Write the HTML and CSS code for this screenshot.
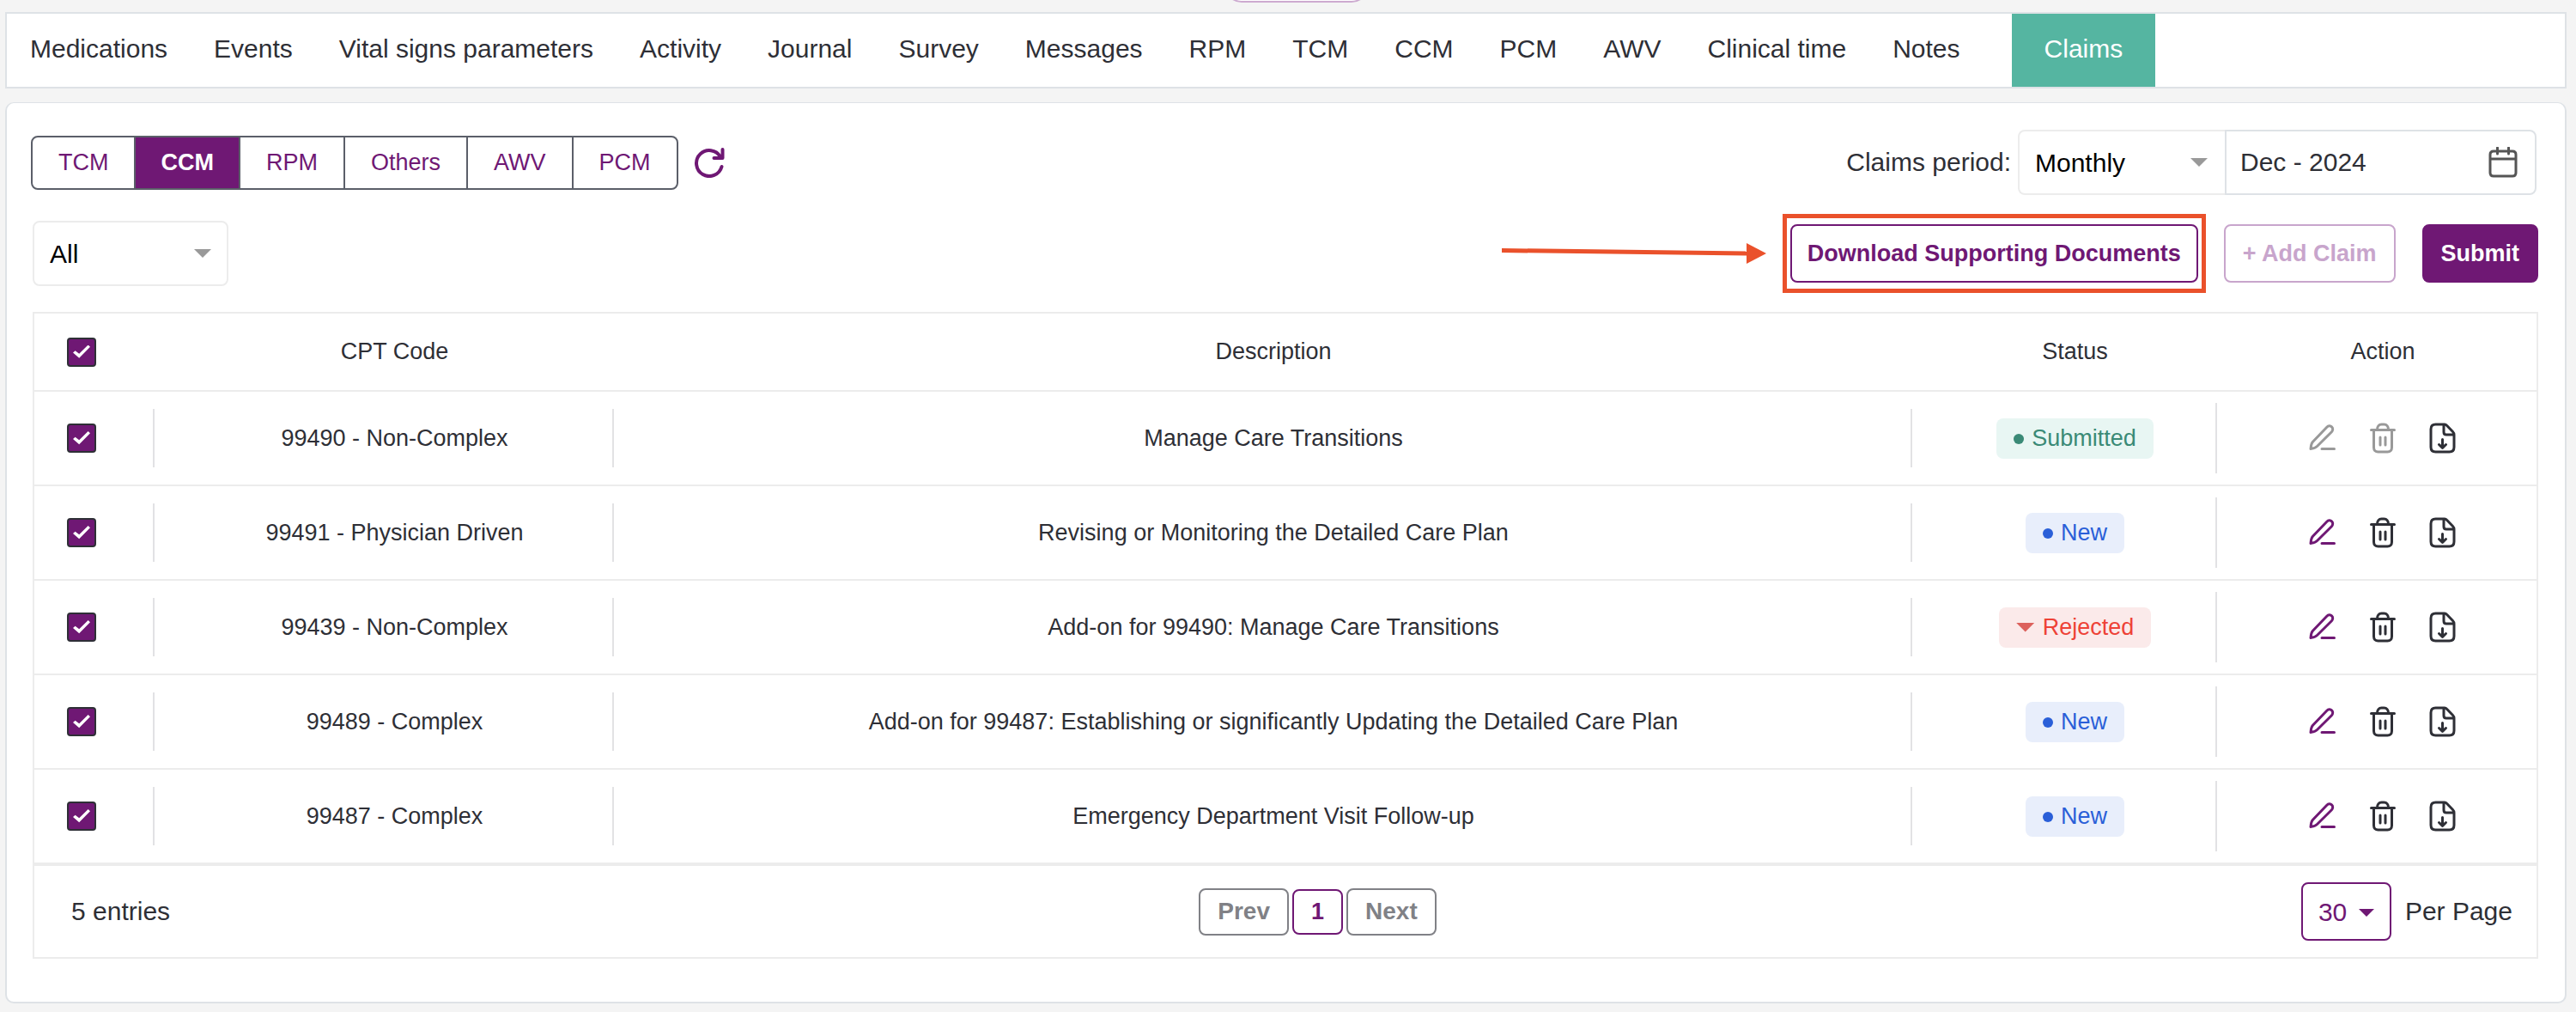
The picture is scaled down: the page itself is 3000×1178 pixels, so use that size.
FILE: index.html
```html
<!DOCTYPE html>
<html lang="en">
<head>
    <meta charset="utf-8">
    <title>Claims</title>
    <link rel="stylesheet" href="styles.css">
</head>

<body>
    <svg class="sprite" aria-hidden="true">
        <symbol id="icon-edit" viewBox="0 0 36 36">
            <path d="M4 30.500C4.300 26.500 4.600 24.500 6.500 22.300L22.800 5.300C24.500 3.500 27 3.300 28.500 4.900C30.200 6.500 30 9 28.400 10.700L11.500 27.500C9.500 29.500 7.500 29.800 4 30.500ZM17 30.500H31.500"/>
        </symbol>
        <symbol id="icon-trash" viewBox="0 0 36 36">
            <path d="M4.500 8.500H31.500M7.500 8.500V29C7.500 32 9.500 34 12.500 34H23.500C26.500 34 28.500 32 28.500 29V8.500M11.500 8C11.500 4.500 13.500 2 16.500 2H19.500C22.500 2 24.500 4.500 24.500 8M15 17V26M21 17V26"/>
        </symbol>
        <symbol id="icon-file" viewBox="0 0 36 36">
            <path d="M20 2H9.500C6 2 4 4 4 7.500V28.500C4 32 6 34 9.500 34H25.500C29 34 31 32 31 28.500V14C31 12.500 30.500 11.500 29.500 10.500L22.500 3.200C21.800 2.400 21 2 20 2ZM19 2V11C19 13 20 14 22 14H31M17.500 19.500V29M13.500 25.500L17.500 29.300L21.500 25.500"/>
        </symbol>
    </svg>

    <div class="topbar">
        <div class="pill"></div>
    </div>

    <nav class="main-nav">
        <a href="#">Medications</a>
        <a href="#">Events</a>
        <a href="#">Vital signs parameters</a>
        <a href="#">Activity</a>
        <a href="#">Journal</a>
        <a href="#">Survey</a>
        <a href="#">Messages</a>
        <a href="#">RPM</a>
        <a href="#">TCM</a>
        <a href="#">CCM</a>
        <a href="#">PCM</a>
        <a href="#">AWV</a>
        <a href="#">Clinical time</a>
        <a href="#">Notes</a>
        <a href="#" class="active">Claims</a>
    </nav>

    <main class="card">
        <div class="toolbar period-row">
            <div class="tab-group">
                <button type="button">TCM</button>
                <button type="button" class="active">CCM</button>
                <button type="button">RPM</button>
                <button type="button">Others</button>
                <button type="button">AWV</button>
                <button type="button">PCM</button>
            </div>
            <button type="button" class="refresh" aria-label="Refresh">
                <svg viewBox="0 0 40 36"><path d="M33 11.500A15 15 0 1 0 34.500 23M35.500 3V13H25.500"/></svg>
            </button>
            <label class="period-label" for="period">Claims period:</label>
            <span class="select period">
                <select id="period"><option>Monthly</option><option>Yearly</option></select>
            </span>
            <span class="date">
                <input type="text" id="month" aria-label="Month" value="Dec - 2024">
                <svg viewBox="0 0 34 36"><path d="M6 5H28Q32 5 32 9V30Q32 34 28 34H6Q2 34 2 30V9Q2 5 6 5ZM2 14H32M10.500 1V8M23.500 1V8"/></svg>
            </span>
        </div>

        <div class="toolbar filter-row">
            <span class="select filter">
                <select id="filter" aria-label="Filter"><option>All</option><option>New</option><option>Submitted</option><option>Rejected</option></select>
            </span>
            <svg class="arrow" viewBox="0 0 308 24"><path d="M0 6L286 9.500V14.500L0 11Z"/><path d="M285 0L308 12L285 24Z"/></svg>
            <span class="highlight">
                <button type="button" class="btn btn-download">Download Supporting Documents</button>
            </span>
            <button type="button" class="btn btn-add" disabled>+ Add Claim</button>
            <button type="button" class="btn btn-submit">Submit</button>
        </div>

        <div class="claims">
            <table>
                <colgroup>
                    <col class="col-check">
                    <col class="col-code">
                    <col>
                    <col class="col-status">
                    <col class="col-action">
                </colgroup>
                <thead>
                    <tr>
                        <th><input type="checkbox" aria-label="Select all" checked></th>
                        <th>CPT Code</th>
                        <th>Description</th>
                        <th>Status</th>
                        <th>Action</th>
                    </tr>
                </thead>
                <tbody>
                    <tr>
                        <td><input type="checkbox" aria-label="Select 99490" checked></td>
                        <td>99490 - Non-Complex</td>
                        <td>Manage Care Transitions</td>
                        <td><span class="badge submitted">Submitted</span></td>
                        <td>
                            <div class="actions">
                                <button type="button" class="edit" aria-label="Edit" disabled><svg><use href="#icon-edit"/></svg></button>
                                <button type="button" aria-label="Delete" disabled><svg><use href="#icon-trash"/></svg></button>
                                <button type="button" aria-label="Download"><svg><use href="#icon-file"/></svg></button>
                            </div>
                        </td>
                    </tr>
                    <tr>
                        <td><input type="checkbox" aria-label="Select 99491" checked></td>
                        <td>99491 - Physician Driven</td>
                        <td>Revising or Monitoring the Detailed Care Plan</td>
                        <td><span class="badge new">New</span></td>
                        <td>
                            <div class="actions">
                                <button type="button" class="edit" aria-label="Edit"><svg><use href="#icon-edit"/></svg></button>
                                <button type="button" aria-label="Delete"><svg><use href="#icon-trash"/></svg></button>
                                <button type="button" aria-label="Download"><svg><use href="#icon-file"/></svg></button>
                            </div>
                        </td>
                    </tr>
                    <tr>
                        <td><input type="checkbox" aria-label="Select 99439" checked></td>
                        <td>99439 - Non-Complex</td>
                        <td>Add-on for 99490: Manage Care Transitions</td>
                        <td><span class="badge rejected">Rejected</span></td>
                        <td>
                            <div class="actions">
                                <button type="button" class="edit" aria-label="Edit"><svg><use href="#icon-edit"/></svg></button>
                                <button type="button" aria-label="Delete"><svg><use href="#icon-trash"/></svg></button>
                                <button type="button" aria-label="Download"><svg><use href="#icon-file"/></svg></button>
                            </div>
                        </td>
                    </tr>
                    <tr>
                        <td><input type="checkbox" aria-label="Select 99489" checked></td>
                        <td>99489 - Complex</td>
                        <td>Add-on for 99487: Establishing or significantly Updating the Detailed Care Plan</td>
                        <td><span class="badge new">New</span></td>
                        <td>
                            <div class="actions">
                                <button type="button" class="edit" aria-label="Edit"><svg><use href="#icon-edit"/></svg></button>
                                <button type="button" aria-label="Delete"><svg><use href="#icon-trash"/></svg></button>
                                <button type="button" aria-label="Download"><svg><use href="#icon-file"/></svg></button>
                            </div>
                        </td>
                    </tr>
                    <tr>
                        <td><input type="checkbox" aria-label="Select 99487" checked></td>
                        <td>99487 - Complex</td>
                        <td>Emergency Department Visit Follow-up</td>
                        <td><span class="badge new">New</span></td>
                        <td>
                            <div class="actions">
                                <button type="button" class="edit" aria-label="Edit"><svg><use href="#icon-edit"/></svg></button>
                                <button type="button" aria-label="Delete"><svg><use href="#icon-trash"/></svg></button>
                                <button type="button" aria-label="Download"><svg><use href="#icon-file"/></svg></button>
                            </div>
                        </td>
                    </tr>
                </tbody>
            </table>

            <div class="table-footer">
                <span class="entries">5 entries</span>
                <div class="pager">
                    <button type="button">Prev</button>
                    <button type="button" class="current">1</button>
                    <button type="button">Next</button>
                </div>
                <div class="per-page">
                    <span class="select page-size">
                        <select id="page_size"><option>30</option><option>50</option></select>
                    </span>
                    <label for="page_size">Per Page</label>
                </div>
            </div>
        </div>
    </main>
</body>
</html>
```

FILE: styles.css
```css
* {  box-sizing: border-box;  }

body {
    margin: 0;
    padding: 0 11px 10px 6px;
    background: #f4f4f4;
    color: #2e2f36;
    font-family: "Liberation Sans", Arial, sans-serif;
    font-size: 30px;
}

button, input, select {
    margin: 0;
    font-family: inherit;
}

.sprite {  display: none;  }

svg {
    fill: none;
    stroke: currentColor;
    stroke-linecap: round;
    stroke-linejoin: round;
}

.topbar {
    display: flex;
    justify-content: center;
    align-items: flex-end;
    height: 14px;
    padding: 0 0 11px 25px;
    overflow: hidden;
}

.pill {
    flex: none;
    width: 168px;
    height: 68px;
    background: #ffffff;
    border: solid 2px #cdaad0;
    border-radius: 20px;
}

/* main navigation */
.main-nav {
    display: flex;
    gap: 54px;
    height: 89px;
    padding-left: 27px;
    background: #ffffff;
    border: solid 2px #dee2e6;
}

.main-nav a {
    display: flex;
    align-items: center;
    padding-bottom: 3px;
    color: inherit;
    text-decoration: none;
    white-space: nowrap;
}

.main-nav .active {
    margin-left: 6px;
    padding: 0 38px 3px;
    background: #55b5a1;
    color: #ffffff;
}

.card {
    margin-top: 16px;
    padding: 31px 31px 50px 28px;
    background: #ffffff;
    border: solid 2px #dee2e6;
    border-top-width: 1px;
    border-radius: 10px;
}

.toolbar {
    display: flex;
    align-items: center;
    height: 76px;
    margin-bottom: 30px;
}

.period-row {  padding-right: 2px;  }

.filter-row, .claims {  margin-left: 2px;  }

.tab-group {
    display: flex;
    height: 63px;
    border: solid 2px #5b5f69;
    border-radius: 8px;
    overflow: hidden;
}

.tab-group button {
    padding: 0 30px;
    background: none;
    border: none;
    border-right: solid 2px #5b5f69;
    color: #6f1874;
    font-size: 27px;
}

.tab-group button:last-child {  border-right: none;  }

.tab-group .active {
    padding: 0 29px;
    background: #6f1874;
    color: #ffffff;
    font-weight: 700;
}

.refresh {
    padding: 0;
    margin-left: 16px;
    background: none;
    border: none;
    color: #6f1874;
    line-height: 0;
}

.refresh svg {
    width: 40px;
    height: 36px;
    stroke-width: 4;
}

/* drop-downs */
.select {
    position: relative;
    display: flex;
}

.select select {
    width: 100%;
    height: 76px;
    padding: 0 0 0 18px;
    appearance: none;
    background: #ffffff;
    border: solid 2px #ececec;
    border-radius: 8px;
    color: #000000;
    font-size: 30px;
}

.select::after {
    content: "";
    position: absolute;
    top: 50%;
    right: 20px;
    margin-top: -5px;
    border: solid 10px transparent;
    border-top-color: #999999;
    border-bottom: none;
    pointer-events: none;
}

.period-label {
    margin-left: auto;
    margin-right: 8px;
}

.period {  width: 241px;  }

.period select {
    border-right: none;
    border-radius: 8px 0 0 8px;
}

.filter {  width: 228px;  }

.date {
    display: flex;
    align-items: center;
    width: 363px;
    height: 76px;
    padding: 0 20px 0 16px;
    border: solid 2px #dee2e6;
    border-radius: 0 8px 8px 0;
}

.date input {
    flex: 1;
    min-width: 0;
    padding: 0;
    background: none;
    border: none;
    color: inherit;
    font-size: 30px;
}

.date svg {
    width: 34px;
    height: 36px;
    color: #555555;
    stroke-width: 3;
}

.btn {
    height: 68px;
    padding: 0 20px;
    background: #ffffff;
    border: solid 2px #6f1874;
    border-radius: 8px;
    color: #6f1874;
    font-size: 27px;
    font-weight: 700;
    white-space: nowrap;
}

.btn-download {  padding: 0 18px;  }

.btn-add {
    margin: 0 31px 0 30px;
    border-color: #c8a5cc;
    color: #c8a5cc;
}

.btn-submit {
    background: #6f1874;
    color: #ffffff;
}

.arrow {
    width: 308px;
    height: 24px;
    margin-left: auto;
    margin-right: 28px;
    fill: #ea512b;
    stroke: none;
}

.highlight {  position: relative;  display: flex;  }

.highlight::after {
    content: "";
    position: absolute;
    inset: -12px -9px;
    border: solid 5px #ea512b;
    pointer-events: none;
}

/* claims table */
.claims {  border: solid 2px #ececec;  }

table {
    width: 100%;
    table-layout: fixed;
    border-collapse: separate;
    border-spacing: 0;
    font-size: 27px;
}

.col-check {  width: 138px;  }
.col-code {  width: 535px;  }
.col-status {  width: 355px;  }
.col-action {  width: 374px;  }

th, td {
    height: 110px;
    padding: 0 0 0 28px;
    border-bottom: solid 2px #ececec;
    text-align: center;
}

th {
    height: 91px;
    font-weight: 400;
}

td + td {
    background: linear-gradient(#e2e2e4, #e2e2e4) no-repeat left center / 2px 68px;
}

td:last-child {  background-size: 2px 82px;  }

th:last-child, td:last-child {  padding-left: 16px;  }

th:first-child, td:first-child {
    padding-left: 38px;
    text-align: left;
}

input[type="checkbox"] {
    display: block;
    width: 34px;
    height: 34px;
    appearance: none;
    background: #ffffff;
    border: solid 2px #2e2f36;
    border-radius: 4px;
}

input[type="checkbox"]:checked {  background: #6f1874;  }

input[type="checkbox"]:checked::before {
    content: "";
    display: block;
    width: 20px;
    height: 16px;
    margin: 7px 5px;
    background: #ffffff;
    clip-path: polygon(0 56%, 13% 42%, 36% 64%, 88% 0, 100% 14%, 36% 96%);
}

.badge {
    display: inline-flex;
    align-items: center;
    gap: 9px;
    height: 47px;
    padding: 0 20px;
    border-radius: 8px;
    vertical-align: middle;
}

.badge::before {
    content: "";
    width: 12px;
    height: 12px;
    margin-top: 2px;
    background: currentColor;
    border-radius: 50%;
}

.submitted {  background: #e8f6f3;  color: #3a8a76;  }

.new {  background: #e8eefb;  color: #2a5fd8;  }

.rejected {  background: #fbeaea;  color: #ee4237;  }

.rejected::before {
    width: 22px;
    height: 11px;
    margin-top: 0;
    background: #dc615c;
    border-radius: 0;
    clip-path: polygon(0 0, 100% 0, 50% 100%);
}

.actions {
    display: flex;
    justify-content: center;
    gap: 34px;
}

.actions button {
    padding: 0;
    background: none;
    border: none;
    color: #2e2f36;
    line-height: 0;
}

.actions svg {
    width: 36px;
    height: 36px;
    stroke-width: 3;
}

.actions .edit {  color: #6f1874;  }

.actions button:disabled {  color: #999999;  }

.table-footer {
    display: grid;
    grid-template-columns: 1fr auto 1fr;
    align-items: center;
    height: 108px;
    padding: 0 28px 0 43px;
    border-top: solid 2px #ececec;
}

.pager {
    display: flex;
    align-items: center;
    gap: 4px;
    padding-left: 60px;
}

.pager button {
    height: 55px;
    padding: 0 20px;
    background: #ffffff;
    border: solid 2px #808186;
    border-radius: 8px;
    color: #808186;
    font-size: 28px;
    font-weight: 700;
}

.pager .current {
    height: 53px;
    border-color: #6f1874;
    color: #6f1874;
    font-size: 27px;
}

.per-page {
    display: flex;
    justify-content: flex-end;
    align-items: center;
    gap: 16px;
}

.page-size {  width: 105px;  }

.page-size select {
    height: 68px;
    border-color: #6f1874;
    color: #6f1874;
}

.page-size::after {
    margin-top: -3px;
    border-width: 9px 9px 0;
    border-top-color: #6f1874;
}
```
